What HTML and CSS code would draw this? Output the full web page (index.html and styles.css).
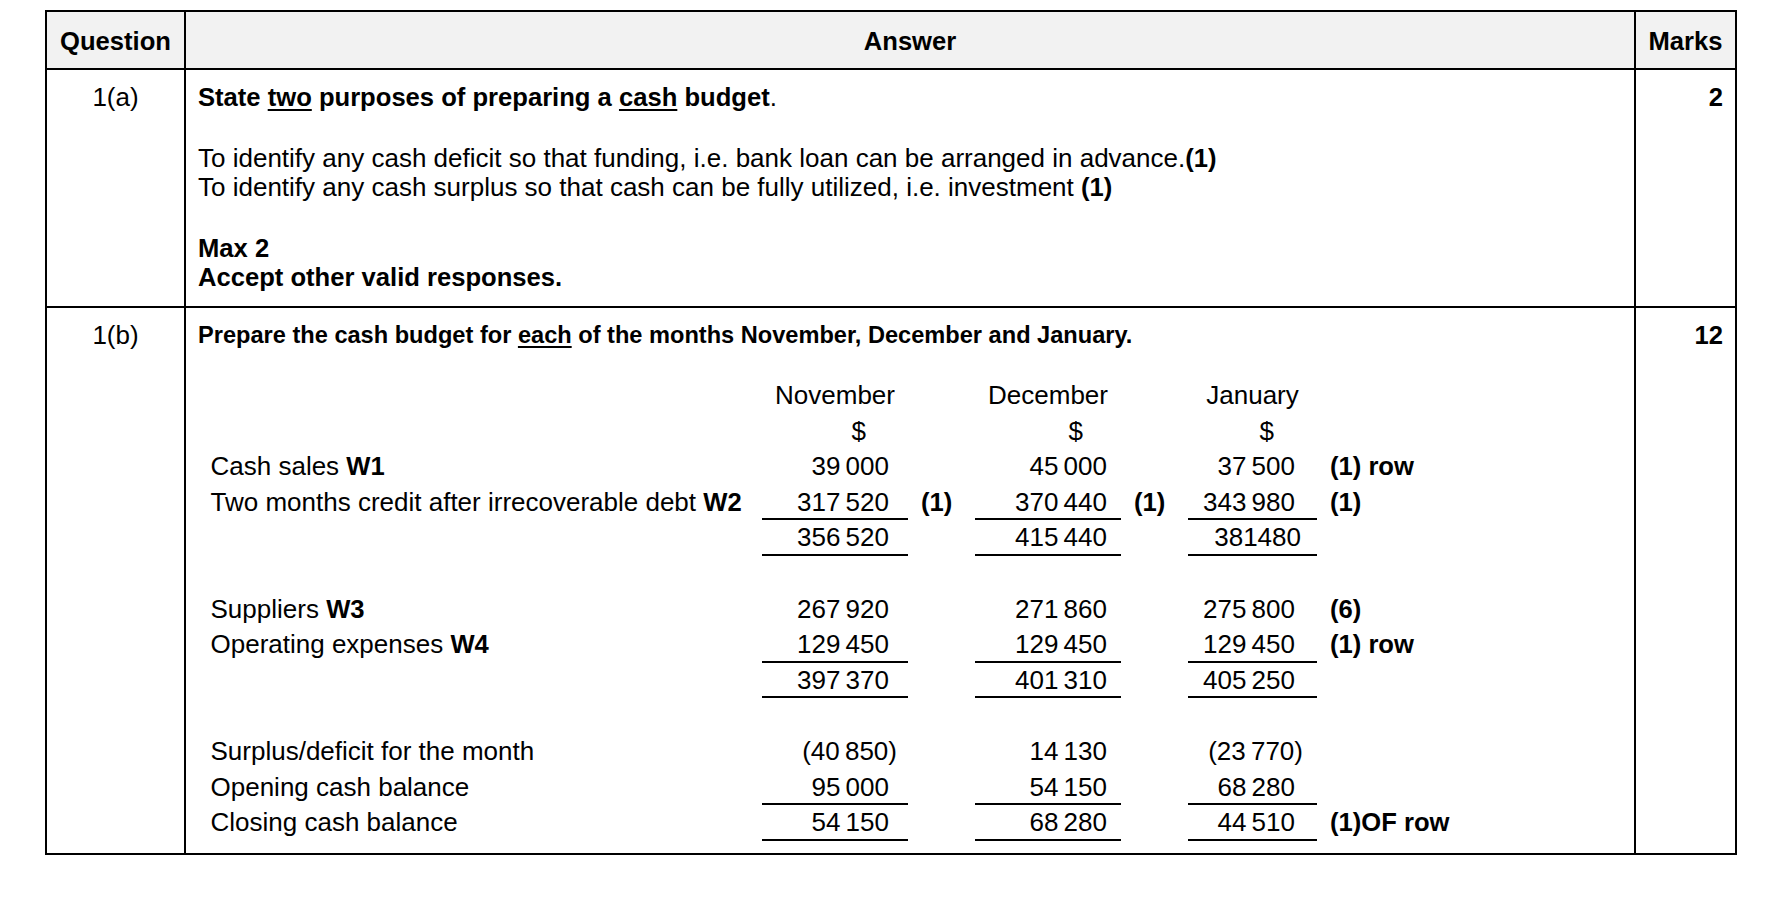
FILE: index.html
```html
<!DOCTYPE html>
<html lang="en">
<head>
<meta charset="utf-8">
<title>Mark scheme – cash budget</title>
<link rel="stylesheet" href="styles.css">
</head>
<body>
<div class="sheet">
  <div class="cell q head">Question</div>
  <div class="cell a head">Answer</div>
  <div class="cell m head">Marks</div>

  <div class="cell q">1(a)</div>
  <div class="cell a">
    <p><b>State <span class="ul">two</span> purposes of preparing a <span class="ul">cash</span> budget</b>.</p>
    <div class="para">
      <p>To identify any cash deficit so that funding, i.e. bank loan can be arranged in advance.<b>(1)</b></p>
      <p>To identify any cash surplus so that cash can be fully utilized, i.e. investment <b>(1)</b></p>
    </div>
    <div class="para strong">
      <p>Max 2</p>
      <p>Accept other valid responses.</p>
    </div>
  </div>
  <div class="cell m">2</div>

  <div class="cell q last">1(b)</div>
  <div class="cell a last tail">
    <p class="prep">Prepare the cash budget for <span class="ul">each</span> of the months November, December and January.</p>
    <div class="budget">
      <div></div><div class="mon">November</div><div></div><div class="mon">December</div><div></div><div class="mon">January</div><div></div>

      <div></div><div class="num cur n1">$</div><div></div><div class="num cur n2">$</div><div></div><div class="num cur n3">$</div><div></div>

      <div class="lbl">Cash sales <b>W1</b></div>
      <div class="num n1">39&thinsp;000</div><div></div>
      <div class="num n2">45&thinsp;000</div><div></div>
      <div class="num n3">37&thinsp;500</div><div class="mk">(1) row</div>

      <div class="lbl">Two months credit after irrecoverable debt <b>W2</b></div>
      <div class="num n1 u">317&thinsp;520</div><div class="mk">(1)</div>
      <div class="num n2 u">370&thinsp;440</div><div class="mk">(1)</div>
      <div class="num n3 u">343&thinsp;980</div><div class="mk">(1)</div>

      <div></div>
      <div class="num n1 u">356&thinsp;520</div><div></div>
      <div class="num n2 u">415&thinsp;440</div><div></div>
      <div class="num n3 u"><span class="nudge">381480</span></div><div></div>

      <div class="gap"></div>

      <div class="lbl">Suppliers <b>W3</b></div>
      <div class="num n1">267&thinsp;920</div><div></div>
      <div class="num n2">271&thinsp;860</div><div></div>
      <div class="num n3">275&thinsp;800</div><div class="mk">(6)</div>

      <div class="lbl">Operating expenses <b>W4</b></div>
      <div class="num n1 u">129&thinsp;450</div><div></div>
      <div class="num n2 u">129&thinsp;450</div><div></div>
      <div class="num n3 u">129&thinsp;450</div><div class="mk">(1) row</div>

      <div></div>
      <div class="num n1 u">397&thinsp;370</div><div></div>
      <div class="num n2 u">401&thinsp;310</div><div></div>
      <div class="num n3 u">405&thinsp;250</div><div></div>

      <div class="gap"></div>

      <div class="lbl">Surplus/deficit for the month</div>
      <div class="num n1">(40&thinsp;850<span class="hang">)</span></div><div></div>
      <div class="num n2">14&thinsp;130</div><div></div>
      <div class="num n3">(23&thinsp;770<span class="hang">)</span></div><div></div>

      <div class="lbl">Opening cash balance</div>
      <div class="num n1 u">95&thinsp;000</div><div></div>
      <div class="num n2 u">54&thinsp;150</div><div></div>
      <div class="num n3 u">68&thinsp;280</div><div></div>

      <div class="lbl">Closing cash balance</div>
      <div class="num n1 u">54&thinsp;150</div><div></div>
      <div class="num n2 u">68&thinsp;280</div><div></div>
      <div class="num n3 u">44&thinsp;510</div><div class="mk">(1)OF row</div>
    </div>
  </div>
  <div class="cell m last">12</div>
</div>
</body>
</html>
```

FILE: styles.css
```css
* {
  box-sizing: border-box;
}

body {
  margin: 0;
  background: #ffffff;
  color: #000000;
  font-family: "Liberation Sans", Arial, sans-serif;
  font-size: 26px;
  line-height: 28.5px;
}

p {
  margin: 0;
}

b,
.strong {
  font-weight: 700;
  font-size: 25.6px;
}

.strong b {
  font-size: inherit;
}

.sheet {
  display: grid;
  grid-template-columns: 139px 1450px 99px;
  width: 1692px;
  margin: 10px 0 0 45px;
  border: 2px solid #000000;
}

.cell {
  border-bottom: 2px solid #000000;
}

.cell.last {
  border-bottom: 0;
}

.q {
  border-right: 2px solid #000000;
  text-align: center;
  padding-top: 13px;
}

.a {
  border-right: 2px solid #000000;
  padding: 13px 12px 14.5px 12px;
}

.a.tail {
  padding-bottom: 12px;
}

.m {
  text-align: right;
  font-weight: 700;
  font-size: 25.6px;
  padding: 13px 12px 0 0;
}

.head {
  background: #f2f2f2;
  font-weight: 700;
  font-size: 25.6px;
  text-align: center;
  padding: 14.5px 0 13px 0;
}

.para {
  margin-top: 32.5px;
}

.para.strong {
  margin-top: 33px;
}

.strong p + p {
  margin-top: 0.5px;
}

.ul {
  text-decoration: underline;
  text-decoration-thickness: 2px;
  text-underline-offset: 3px;
}

.prep {
  font-size: 23.6px;
  font-weight: 700;
}

.prep .ul {
  font-size: inherit;
}

.budget {
  display: grid;
  grid-template-columns: 564px 146px 67px 146px 67px 129px 1fr;
  grid-auto-rows: 35.6px;
  line-height: 35.6px;
  margin-top: 28.5px;
  white-space: nowrap;
}

.gap {
  grid-column: 1 / -1;
}

.lbl {
  padding-left: 12.5px;
}

.mon {
  text-align: center;
}

.num {
  text-align: right;
}

.n1 {
  padding-right: 19px;
}

.n2 {
  padding-right: 14px;
}

.n3 {
  padding-right: 22px;
}

.cur.n1 {
  padding-right: 42px;
}

.cur.n2 {
  padding-right: 38px;
}

.cur.n3 {
  padding-right: 43px;
}

.u {
  border-bottom: 2px solid #000000;
}

.mk {
  padding-left: 13px;
  font-weight: 700;
  font-size: 25.6px;
}

.hang {
  margin-right: -8px;
}

.nudge {
  margin-right: -6px;
}
```
